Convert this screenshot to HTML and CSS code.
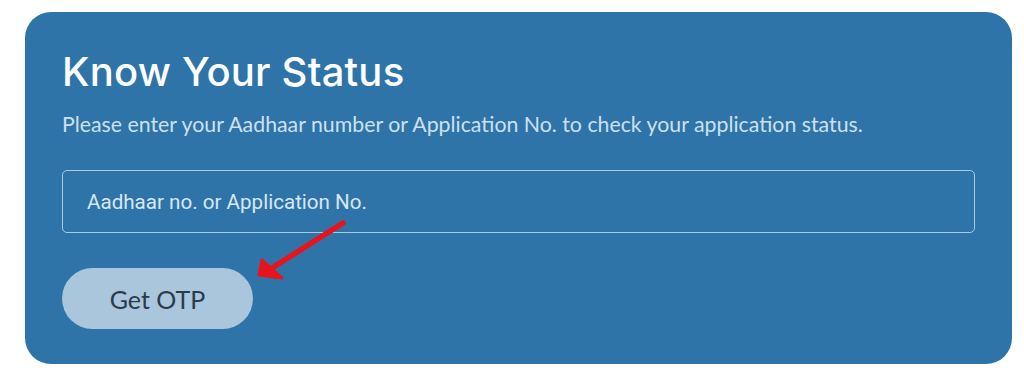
FILE: index.html
```html
<!DOCTYPE html>
<html lang="en">
<head>
    <meta charset="UTF-8">
    <meta name="viewport" content="width=device-width, initial-scale=1.0">
    <title>Know Your Status</title>
    <link rel="stylesheet" href="styles.css">
</head>
<body>
    <div class="card">
        <h1 class="title">Know Your Status</h1>
        <p class="subtitle">Please enter your Aadhaar number or Application No. to check your application status.</p>
        <div class="field">
            <input type="text" id="aadhaar" placeholder="Aadhaar no. or Application No.">
        </div>
        <div class="actions">
            <button class="otp-button">Get OTP</button>
            <svg class="arrow" width="100" height="70" viewBox="0 0 100 70">
                <line x1="88" y1="5" x2="17" y2="50" stroke="#e8141b" stroke-width="5.5" stroke-linecap="round"/>
                <polygon points="4,57 7,42 27,60" fill="#e8141b" stroke="#e8141b" stroke-width="3" stroke-linejoin="round"/>
            </svg>
        </div>
    </div>
</body>
</html>
```

FILE: styles.css
```css
body {
    margin: 0;
    padding: 0;
    background: #ffffff;
    font-family: 'Lato', 'Liberation Sans', Arial, sans-serif;
}
.card {
    position: relative;
    box-sizing: border-box;
    width: 987px;
    height: 352px;
    margin: 12px 0 0 25px;
    padding: 40px 37px 0 37px;
    background: #2e74a8;
    border-radius: 26px;
}
.title {
    margin: 0;
    font-family: 'Inter', 'Liberation Sans', sans-serif;
    font-weight: 500;
    font-size: 40px;
    line-height: 40px;
    color: #ffffff;
    letter-spacing: 0.2px;
}
.subtitle {
    margin: 19px 0 0 0;
    font-size: 21.3px;
    line-height: 26px;
    color: #cde0ee;
}
.field {
    margin-top: 33px;
    width: 913px;
}
.field input {
    box-sizing: border-box;
    width: 100%;
    height: 63px;
    padding: 0 24px;
    font-family: 'Roboto', 'Liberation Sans', sans-serif;
    font-size: 20.6px;
    color: #ffffff;
    background: transparent;
    border: 1.5px solid #a6cbe7;
    border-radius: 5px;
    outline: none;
}
.field input::placeholder {
    color: #d7e7f3;
}
.actions {
    position: relative;
    margin-top: 35px;
}
.otp-button {
    width: 191px;
    height: 61px;
    font-family: 'Lato', 'Liberation Sans', sans-serif;
    font-size: 25px;
    color: #2b3b48;
    background: #a9c6dc;
    border: none;
    border-radius: 31px;
    cursor: pointer;
}
.arrow {
    position: absolute;
    left: 193px;
    top: -50px;
}
```
